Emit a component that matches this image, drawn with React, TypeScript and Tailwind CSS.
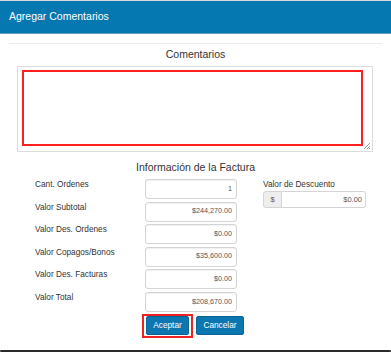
const ROWS: { label: string; value: string }[] = [
  { label: "Cant. Ordenes", value: "1" },
  { label: "Valor Subtotal", value: "$244,270.00" },
  { label: "Valor Des. Ordenes", value: "$0.00" },
  { label: "Valor Copagos/Bonos", value: "$35,600.00" },
  { label: "Valor Des. Facturas", value: "$0.00" },
  { label: "Valor Total", value: "$208,670.00" },
];

function ResizeHandle() {
  return (
    <svg width="8" height="8" viewBox="0 0 8 8" className="absolute right-[1px] bottom-[1px]">
      <path d="M7 1 L1 7 M7 4 L4 7 M7 6 L6 7" stroke="#999" strokeWidth="1" />
    </svg>
  );
}

function ValueBox({ value }: { value: string }) {
  return (
    <div className="flex h-[20px] w-[92px] items-center justify-end rounded-[3px] border border-[#d4d4d4] bg-white pr-[4px] text-[7.2px] text-[#555] shadow-[inset_0_1px_1px_rgba(0,0,0,0.06)]">
      {value}
    </div>
  );
}

export default function App() {
  return (
    <div
      className="flex h-[353px] w-[391px] flex-col overflow-hidden border-t border-[#d9d9d9] bg-white text-[#333]"
      style={{ fontFamily: '"Liberation Sans", Arial, sans-serif' }}
    >
      <div className="flex h-[33px] items-center border-b border-[#5f9cc0] bg-[#0577b1] pl-[9px] text-[10.5px] text-white">
        Agregar Comentarios
      </div>

      <div className="px-[9px]">
        <div className="mt-[9px] border-t border-[#ececec]" />
        <div className="mt-[4px] text-center text-[10.5px] leading-[12px]">Comentarios</div>

        <div className="relative ml-[8px] mt-[6px] h-[86px] w-[356px] border border-[#dcdcdc] pl-[4px] pt-[3px]">
          <div className="h-[76px] w-[341px] border-2 border-[#ff1f1f]" />
          <ResizeHandle />
        </div>

        <div className="mt-[9px] text-center text-[10.5px] leading-[12px]">Información de la Factura</div>

        <div className="mt-[6px] flex pl-[26px]">
          <div className="flex flex-col gap-[2.6px]">
            {ROWS.map((r) => (
              <div key={r.label} className="flex items-start">
                <div className="w-[110px] text-[8.25px] leading-[12px]">{r.label}</div>
                <ValueBox value={r.value} />
              </div>
            ))}
          </div>

          <div className="ml-[26px] flex flex-col">
            <div className="text-[8.25px] leading-[12px]">Valor de Descuento</div>
            <div className="flex h-[17px] w-[103px]">
              <div className="flex w-[19px] items-center justify-center rounded-l-[3px] border border-[#d4d4d4] bg-[#eeeeee] text-[7.5px] text-[#555]">
                $
              </div>
              <div className="flex flex-1 items-center justify-end rounded-r-[3px] border border-l-0 border-[#d4d4d4] pr-[3px] text-[7.5px] text-[#555]">
                $0.00
              </div>
            </div>
          </div>
        </div>

        <div className="mt-[2px] flex items-center pl-[133px]">
          <div className="flex h-[24px] items-center border-2 border-[#ee2222] px-[2px]">
            <button className="h-[19px] w-[43px] rounded-[2px] border border-[#0a6597] bg-[#0b76b0] text-[8.25px] text-white">
              Aceptar
            </button>
          </div>
          <button className="ml-[3px] h-[19px] w-[48px] rounded-[2px] border border-[#0a6597] bg-[#0b76b0] text-[8.25px] text-white">
            Cancelar
          </button>
        </div>
      </div>

      <div className="mb-[1px] mt-auto h-[2px] rounded-[1px] bg-[#2a2a2a]" />
    </div>
  );
}
